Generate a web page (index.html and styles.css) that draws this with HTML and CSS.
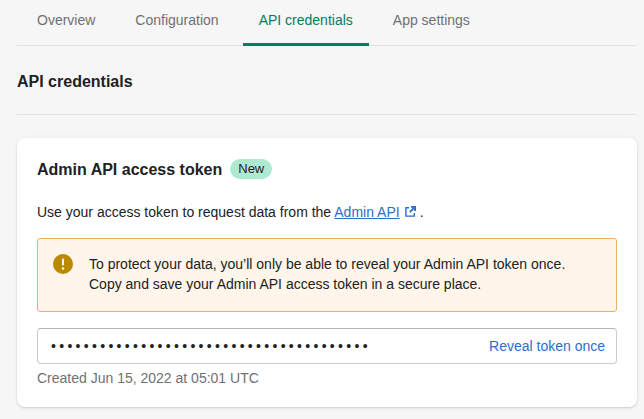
FILE: index.html
```html
<!DOCTYPE html>
<html lang="en">
<head>
<meta charset="utf-8">
<title>API credentials</title>
<link rel="stylesheet" href="styles.css">
</head>
<body>
<div class="page">
  <nav class="tabs">
    <a class="tab">Overview</a>
    <a class="tab">Configuration</a>
    <a class="tab tab-active">API credentials</a>
    <a class="tab">App settings</a>
  </nav>
  <header class="page-header"><h1>API credentials</h1></header>
  <section class="card">
    <div class="card-title">
      <h2>Admin API access token</h2>
      <span class="badge">New</span>
    </div>
    <p class="intro">Use your access token to request data from the <a class="link">Admin API</a><svg class="ext-icon" viewBox="0 0 11 11" width="11" height="11" aria-hidden="true"><path d="M4 1.700H.9v8.400h8.400V7" fill="none" stroke="#2c6ecb" stroke-width="1.400"/><path d="M6 .9h4.100V5M10 1L4.800 6.200" fill="none" stroke="#2c6ecb" stroke-width="1.800"/></svg><span class="dot">.</span></p>
    <div class="banner">
      <svg class="banner-icon" viewBox="0 0 20 20" width="20" height="20" aria-hidden="true"><circle cx="10" cy="10" r="10" fill="#b98900"/><rect x="9" y="4.500" width="2" height="7" rx="1" fill="#fff"/><circle cx="10" cy="14.500" r="1.200" fill="#fff"/></svg>
      <p>To protect your data, you’ll only be able to reveal your Admin API token once.<br>Copy and save your Admin API access token in a secure place.</p>
    </div>
    <div class="field">
      <span class="dots">•••••••••••••••••••••••••••••••••••••••</span>
      <a class="reveal">Reveal token once</a>
    </div>
    <p class="help">Created Jun 15, 2022 at 05:01 UTC</p>
  </section>
</div>
</body>
</html>
```
FILE: styles.css
```css
* { box-sizing: border-box; }
html, body { margin: 0; padding: 0; height: 100%; }
body {
  background: #f6f6f7;
  color: #202223;
  font-family: "Liberation Sans", Arial, sans-serif;
  font-size: 14px;
  line-height: 20px;
  overflow: hidden;
}
.page { padding: 0 7px 0 17px; width: 644px; }
.page > .card { width: 620px; }
.tabs {
  display: flex;
  gap: 8px;
  height: 46px;
  padding-left: 4px;
  border-bottom: 1px solid #e1e3e5;
}
.tab {
  display: block;
  height: 46px;
  padding: 10px 16px 0;
  color: #6d7175;
}
.tab-active {
  color: #008060;
  border-bottom: 3px solid #008060;
  border-radius: 3px 3px 0 0;
}
.page-header {
  height: 69px;
  padding-top: 26px;
  border-bottom: 1px solid #e1e3e5;
}
h1 { margin: 0; font-size: 16px; line-height: 20px; font-weight: 700; }
.card {
  margin-top: 23px;
  background: #fff;
  border-radius: 8px;
  padding: 20px;
  box-shadow: 0 0 5px rgba(23, 24, 24, 0.05), 0 1px 2px rgba(0, 0, 0, 0.15);
  height: 269px;
}
.card-title { display: flex; align-items: center; gap: 8px; height: 22px; }
h2 { margin: 2px 0 0; font-size: 16px; line-height: 22px; font-weight: 700; }
.badge {
  background: #aee9d1;
  border-radius: 10px;
  padding: 0 8px;
  font-size: 13px;
  line-height: 20px;
  height: 20px;
}
.intro { margin: 22px 0 0; height: 20px; }
.link { color: #2c6ecb; text-decoration: underline; }
.ext-icon { vertical-align: 0; margin-left: 5px; }
.dot { margin-left: 4px; }
.banner {
  display: flex;
  gap: 16px;
  margin-top: 16px;
  height: 74px;
  padding: 15px;
  background: #fff5ea;
  border: 1px solid #e8b166;
  border-radius: 3px;
}
.banner p { margin: 0; }
.banner-icon { flex: none; }
.field {
  display: flex;
  justify-content: space-between;
  align-items: center;
  margin-top: 16px;
  height: 36px;
  padding: 0 11px 0 13px;
  border: 1px solid #c9cccf;
  border-top-color: #aeb4b9;
  border-radius: 4px;
}
.dots { letter-spacing: 3.300px; font-size: 14px; }
.reveal { color: #2c6ecb; }
.help { margin: 4px 0 0; color: #6d7175; }
```
